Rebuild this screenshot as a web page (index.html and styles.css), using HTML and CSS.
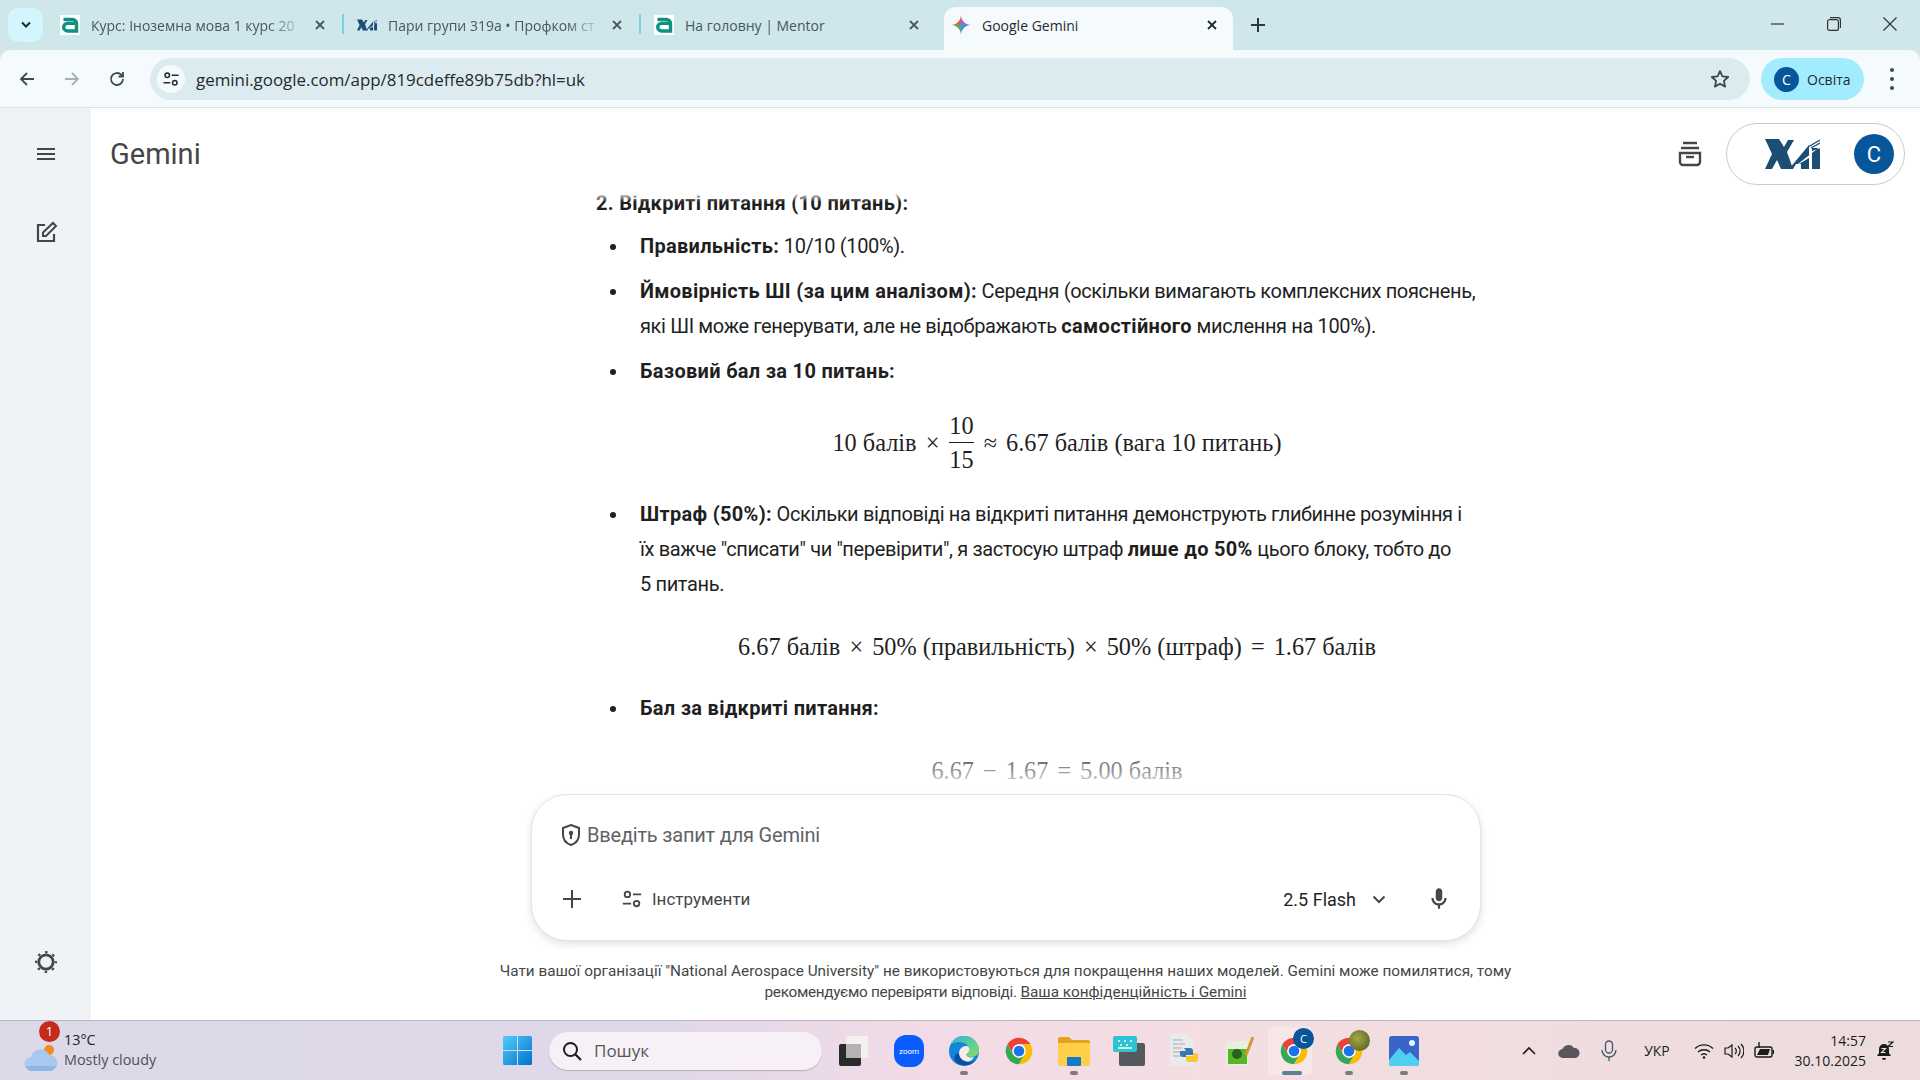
FILE: index.html
```html
<!DOCTYPE html>
<html lang="uk">

<head>
    <meta charset="UTF-8">
    <meta name="viewport" content="width=device-width, initial-scale=1.0">
    <title>Google Gemini</title>
    <link rel="stylesheet" href="styles.css">
</head>

<body>
    <svg class="sprite" xmlns="http://www.w3.org/2000/svg">
        <symbol id="mentor" viewBox="0 0 20 20">
            <rect width="20" height="20" fill="#fff"/>
            <path d="M3.500 4.500h9a4 4 0 0 1 4 4v7.500H7.500a3.800 3.800 0 0 1 0-7.600h9" fill="none" stroke="#0f9182" stroke-width="3.400"/>
        </symbol>
        <symbol id="xai" viewBox="0 0 55 30">
            <path fill="#1c4e73" d="M0 0h14l5 8 4-7h6l-7 12 6 17H16l-4-9-5 9H0l7-15z"/>
            <path fill="#1c4e73" d="M24 30 44 6v24h-8v-5h-5l-3 5z"/>
            <path fill="#1c4e73" d="M47 9h8v21h-8z"/>
            <path fill="#fff" d="M56 7 29 28l15-9 3-7 9-3z"/>
            <path stroke="#1c4e73" stroke-width="1.300" d="M43 8 55 1M46 9l9-5"/>
        </symbol>
        <symbol id="chrome" viewBox="0 0 48 48">
            <path fill="#ea4335" d="M6.680 14A20 20 0 0 1 41.320 14H24A10 10 0 0 0 15.340 29z"/>
            <path fill="#34a853" d="M6.680 14A20 20 0 0 0 24 44L32.660 29A10 10 0 0 1 15.340 29z"/>
            <path fill="#fbbc04" d="M41.320 14A20 20 0 0 1 24 44L32.660 29A10 10 0 0 0 24 14z"/>
            <circle cx="24" cy="24" r="10" fill="#fff"/>
            <circle cx="24" cy="24" r="8" fill="#1a73e8"/>
        </symbol>
        <symbol id="close" viewBox="0 0 12 12">
            <path d="M2 2l8 8M10 2l-8 8" fill="none" stroke="currentColor" stroke-width="1.800"/>
        </symbol>
        <symbol id="tune" viewBox="0 0 24 24">
            <g fill="none" stroke="currentColor" stroke-width="2">
                <circle cx="7" cy="7" r="3"/>
                <circle cx="17" cy="17" r="3"/>
                <path d="M13 7h9M2 17h9"/>
            </g>
        </symbol>
        <symbol id="mic" viewBox="0 0 24 24">
            <path fill="currentColor" d="M12 14c1.660 0 3-1.340 3-3V5c0-1.660-1.340-3-3-3S9 3.340 9 5v6c0 1.660 1.340 3 3 3z"/>
            <path fill="currentColor" d="M17 11c0 2.760-2.240 5-5 5s-5-2.240-5-5H5c0 3.530 2.610 6.430 6 6.920V21h2v-3.080c3.390-.49 6-3.390 6-6.920h-2z"/>
        </symbol>
    </svg>

    <div class="tabstrip">
        <button class="tab-menu">
            <svg width="12" height="8" viewBox="0 0 12 8"><path d="M2 1.500l4 4 4-4" fill="none" stroke="#1f2a2e" stroke-width="2"/></svg>
        </button>
        <div class="tab">
            <svg class="fav"><use href="#mentor"/></svg>
            <span class="tab-title">Курс: Іноземна мова 1 курс 20</span>
            <svg class="tab-close"><use href="#close"/></svg>
        </div>
        <div class="tab">
            <svg class="fav"><use href="#xai"/></svg>
            <span class="tab-title">Пари групи 319а • Профком ст</span>
            <svg class="tab-close"><use href="#close"/></svg>
        </div>
        <div class="tab tab-last">
            <svg class="fav"><use href="#mentor"/></svg>
            <span class="tab-title tab-title-full">На головну | Mentor</span>
            <svg class="tab-close"><use href="#close"/></svg>
        </div>
        <div class="tab tab-active">
            <svg class="fav" viewBox="0 0 24 24">
                <path fill="#ee5b3b" d="M12 0C12 6.600 6.600 12 0 12h12z"/>
                <path fill="#8e6fd8" d="M12 0c0 6.600 5.400 12 12 12H12z"/>
                <path fill="#3d8fe9" d="M24 12c-6.600 0-12 5.400-12 12V12z"/>
                <path fill="#49b36b" d="M12 24c0-6.600-5.400-12-12-12h12z"/>
            </svg>
            <span class="tab-title tab-title-full">Google Gemini</span>
            <svg class="tab-close"><use href="#close"/></svg>
        </div>
        <svg class="new-tab" width="14" height="14" viewBox="0 0 14 14"><path d="M7 0v14M0 7h14" stroke="#2d3a3e" stroke-width="2"/></svg>
        <div class="win-controls">
            <svg width="14" height="14" viewBox="0 0 14 14"><path d="M0 7h13" stroke="#333" stroke-width="1.200"/></svg>
            <svg width="14" height="14" viewBox="0 0 14 14"><rect x=".6" y="2.600" width="10.800" height="10.800" rx="2" fill="none" stroke="#333" stroke-width="1.200"/><path d="M3 .6h8a2.400 2.400 0 0 1 2.400 2.400v8" fill="none" stroke="#333" stroke-width="1.200"/></svg>
            <svg width="14" height="14" viewBox="0 0 14 14"><path d="M.5.5l13 13M13.500.5l-13 13" stroke="#333" stroke-width="1.200"/></svg>
        </div>
    </div>

    <div class="toolbar">
        <button class="nav-btn">
            <svg width="18" height="18" viewBox="0 0 18 18"><path d="M16 9H3M9 3L3 9l6 6" fill="none" stroke="#3c4a4f" stroke-width="1.800"/></svg>
        </button>
        <button class="nav-btn">
            <svg width="18" height="18" viewBox="0 0 18 18"><path d="M2 9h13M9 3l6 6-6 6" fill="none" stroke="#a6b1b5" stroke-width="1.800"/></svg>
        </button>
        <button class="nav-btn">
            <svg width="18" height="18" viewBox="0 0 18 18"><path d="M15 9a6 6 0 1 1-1.800-4.300L15 6.500M15 2v4.500h-4.500" fill="none" stroke="#3c4a4f" stroke-width="1.800"/></svg>
        </button>
        <div class="omnibox">
            <span class="site-info"><svg width="18" height="18"><use href="#tune"/></svg></span>
            <span class="url">gemini.google.com/app/819cdeffe89b75db?hl=uk</span>
            <svg class="star" width="20" height="20" viewBox="0 0 20 20"><path d="M10 2l2.400 5.400 5.800.6-4.300 3.900 1.200 5.700L10 14.700l-5.100 2.900 1.200-5.700L1.800 8l5.800-.6z" fill="none" stroke="#3c4a4f" stroke-width="1.800" stroke-linejoin="round"/></svg>
        </div>
        <div class="profile-chip">
            <span class="chip-avatar">C</span>
            <span>Освіта</span>
        </div>
        <div class="dots"><i></i><i></i><i></i></div>
    </div>

    <div class="app">
        <aside class="sidebar">
            <svg width="18" height="14" viewBox="0 0 18 14"><path d="M0 2h18M0 7h18M0 12h18" stroke="#444746" stroke-width="2"/></svg>
            <svg class="side-edit" width="24" height="24" viewBox="0 0 24 24"><path d="M11 4H4v16h16v-7" fill="none" stroke="#444746" stroke-width="2.200"/><path d="M9 15v-3.500L19 2l3 3-10 10z" fill="none" stroke="#444746" stroke-width="2"/></svg>
            <svg class="side-settings" width="24" height="24" viewBox="0 0 24 24"><circle cx="12" cy="12" r="7.200" fill="none" stroke="#444746" stroke-width="2.800"/><circle cx="12" cy="12" r="9.800" fill="none" stroke="#444746" stroke-width="2.200" stroke-dasharray="2.600 5.097" stroke-dashoffset="1.300"/></svg>
        </aside>

        <main class="main">
            <header class="app-header">
                <span class="brand">Gemini</span>
                <svg class="archive" width="24" height="26" viewBox="0 0 24 26"><path d="M5 2h14M3 7h18" stroke="#444746" stroke-width="2.400"/><path d="M2 12h20v9a3 3 0 0 1-3 3H5a3 3 0 0 1-3-3z" fill="none" stroke="#444746" stroke-width="2.400"/><path d="M8 16h8" stroke="#444746" stroke-width="2.400"/></svg>
                <div class="account">
                    <svg class="account-logo"><use href="#xai"/></svg>
                    <span class="account-avatar">C</span>
                </div>
            </header>

            <section class="conversation">
                <div class="answer">
                    <h3 class="answer-head">2. Відкриті питання (10 питань):</h3>
                    <ul class="answer-list">
                        <li><b>Правильність:</b> 10/10 (100%).</li>
                        <li><b>Ймовірність ШІ (за цим аналізом):</b> Середня (оскільки вимагають комплексних пояснень, які ШІ може генерувати, але не відображають <b>самостійного</b> мислення на 100%).</li>
                        <li>
                            <b>Базовий бал за 10 питань:</b>
                            <div class="math math-tall">10 балів <span class="op">×</span>
                                <span class="frac"><span>10</span><span class="frac-low">15</span></span>
                                <span class="op">≈</span> 6.67 балів (вага 10 питань)</div>
                        </li>
                        <li>
                            <b>Штраф (50%):</b> Оскільки відповіді на відкриті питання демонструють глибинне розуміння і їх важче "списати" чи "перевірити", я застосую штраф <b>лише до 50%</b> цього блоку, тобто до<br>5 питань.
                            <div class="math">6.67 балів <span class="op">×</span> 50% (правильність) <span class="op">×</span> 50% (штраф) <span class="op">=</span> 1.67 балів</div>
                        </li>
                        <li>
                            <b>Бал за відкриті питання:</b>
                            <div class="math">6.67 <span class="op">−</span> 1.67 <span class="op">=</span> 5.00 балів</div>
                        </li>
                    </ul>
                </div>
            </section>

            <div class="composer">
                <div class="composer-input">
                    <svg width="20" height="24" viewBox="0 0 20 24"><path d="M10 2l8 3v6.500c0 5-3.400 8.900-8 10.500-4.600-1.600-8-5.500-8-10.500V5z" fill="none" stroke="#444746" stroke-width="2"/><circle cx="10" cy="10" r="2.200" fill="#444746"/><path d="M10 11v5" stroke="#444746" stroke-width="2"/></svg>
                    <span>Введіть запит для Gemini</span>
                </div>
                <div class="composer-tools">
                    <svg class="tool-plus" width="18" height="18" viewBox="0 0 18 18"><path d="M9 0v18M0 9h18" stroke="#444746" stroke-width="2"/></svg>
                    <svg class="tool-tune" width="22" height="22"><use href="#tune"/></svg>
                    <span class="tool-label">Інструменти</span>
                    <span class="model">2.5 Flash</span>
                    <svg class="model-caret" width="14" height="9" viewBox="0 0 14 9"><path d="M1.500 1.500L7 7l5.500-5.500" fill="none" stroke="#444746" stroke-width="2"/></svg>
                    <svg class="tool-mic" width="26" height="26"><use href="#mic"/></svg>
                </div>
            </div>

            <p class="disclaimer">Чати вашої організації "National Aerospace University" не використовуються для покращення наших моделей. Gemini може помилятися, тому<br><span class="disclaimer-lead">рекомендуємо перевіряти відповіді.</span> <a href="#">Ваша конфіденційність і Gemini</a></p>
        </main>
    </div>

    <footer class="taskbar">
        <div class="weather">
            <div class="weather-icon">
                <svg width="34" height="30" viewBox="0 0 34 30"><circle cx="25" cy="8" r="5" fill="#f08a24"/><path d="M8 29a7 7 0 0 1-1-14A9.500 9.500 0 0 1 25 13a8 8 0 0 1 1 16z" fill="#a9c8ee"/><path d="M8 29a7 7 0 0 1-6-5h30a8 8 0 0 1-6 5z" fill="#8fb4e6"/></svg>
                <span class="weather-badge">1</span>
            </div>
            <div class="weather-text">
                <span>13°C</span>
                <span class="weather-sub">Mostly cloudy</span>
            </div>
        </div>
        <svg class="win-logo" width="29" height="29" viewBox="0 0 29 29">
            <defs>
                <linearGradient id="win" x1="0" y1="0" x2="1" y2="1"><stop offset="0" stop-color="#52cdf9"/><stop offset="1" stop-color="#0071cf"/></linearGradient>
            </defs>
            <path fill="url(#win)" d="M0 1.500A1.500 1.500 0 0 1 1.500 0H14v14H0zM15 0h12.500A1.500 1.500 0 0 1 29 1.500V14H15zM0 15h14v14H1.500A1.500 1.500 0 0 1 0 27.500zM15 15h14v12.500a1.500 1.500 0 0 1-1.500 1.500H15z"/>
        </svg>
        <div class="search-box">
            <svg width="20" height="20" viewBox="0 0 20 20"><circle cx="8.500" cy="8.500" r="6.500" fill="none" stroke="#1c1c1c" stroke-width="2"/><path d="M13 13l6 6" stroke="#1c1c1c" stroke-width="2.200"/></svg>
            <span>Пошук</span>
        </div>
        <div class="apps">
            <div class="app-cell">
                <svg width="32" height="32" viewBox="0 0 32 32"><rect x="8" y="1" width="22" height="22" rx="2" fill="#f4f0f0"/><rect x="1" y="9" width="22" height="22" rx="2" fill="#2a2a2a"/><rect x="8" y="9" width="15" height="14" fill="#b5b2b2"/></svg>
            </div>
            <div class="app-cell">
                <svg width="30" height="32" viewBox="0 0 30 32"><rect width="30" height="32" rx="12" fill="#0b5cff"/><text x="15" y="19" text-anchor="middle" font-size="8" fill="#fff" font-family="Roboto, sans-serif">zoom</text></svg>
            </div>
            <div class="app-cell is-open">
                <svg width="32" height="34" viewBox="0 0 32 34">
                    <defs>
                        <linearGradient id="edgeTop" x1="0" y1="0" x2="1" y2="1"><stop offset="0" stop-color="#2fb6d8"/><stop offset="1" stop-color="#86df5f"/></linearGradient>
                    </defs>
                    <circle cx="16" cy="17" r="15" fill="#0f86d8"/>
                    <path d="M3 11C6 4 11 2 16 2c9 0 15 7 15 14 0 5-4 7-8 7-3.500 0-5-1.500-5-2 3-2 4-6 2-9C17 8 8 6 3 11z" fill="url(#edgeTop)"/>
                    <path d="M11 20c0-6 5-9 9-7.500 2 1.500 2 5.500-2 8 1 2.500 4 3.500 8 2.500-2 4-6 5.500-9 4-4-1-6-4-6-7z" fill="#f7ece9"/>
                    <path d="M11 19c0 6 6 10 12 9 3-.5 5-2 6-4-4 8-15 10-21 4-3-3-2-8 3-9z" fill="#0b4f9e"/>
                </svg>
            </div>
            <div class="app-cell"><svg width="32" height="32"><use href="#chrome"/></svg></div>
            <div class="app-cell is-open">
                <svg width="32" height="30" viewBox="0 0 32 30"><path d="M0 3a2 2 0 0 1 2-2h9l3 3h16a2 2 0 0 1 2 2v3H0z" fill="#e0a31a"/><path d="M0 7h32v21a2 2 0 0 1-2 2H2a2 2 0 0 1-2-2z" fill="#ffcf4a"/><rect x="9" y="21" width="14" height="9" rx="1" fill="#1479c9"/></svg>
            </div>
            <div class="app-cell">
                <svg width="32" height="30" viewBox="0 0 32 30"><rect x="6" y="7" width="26" height="23" rx="2" fill="#55595e"/><rect width="24" height="16" rx="2" fill="#2cc3d3"/><path d="M5 5h2M11 5h2M17 5h2M7 9h2M13 9h2M5 12h14" stroke="#fff" stroke-width="1.500"/></svg>
            </div>
            <div class="app-cell">
                <svg width="28" height="34" viewBox="0 0 28 34"><path d="M0 0h16l8 8v24H0z" fill="#e9eaec"/><path d="M3 6h10M3 10h12M3 14h9M3 18h11M3 22h8" stroke="#aaa"/><path d="M14 14h6a3 3 0 0 1 3 3v4h-7v2h-3a3 3 0 0 1-3-3v-3h6z" fill="#3a78ab"/><path d="M23 19h2a3 3 0 0 1 3 3v3a3 3 0 0 1-3 3h-6a3 3 0 0 1-3-3v-3h7z" fill="#f8c92f"/></svg>
            </div>
            <div class="app-cell">
                <svg width="30" height="32" viewBox="0 0 30 32"><path d="M2 6h22v24H2z" fill="#e8efdd"/><path d="M4 14h19v15H4z" fill="#59b526"/><circle cx="13" cy="19" r="5" fill="#26621b"/><path d="M22 20L29 2" stroke="#d59a2f" stroke-width="3"/></svg>
            </div>
            <div class="app-cell is-active">
                <svg class="app-chrome" width="32" height="32"><use href="#chrome"/></svg>
                <span class="profile-badge">C</span>
            </div>
            <div class="app-cell is-open">
                <svg class="app-chrome" width="32" height="32"><use href="#chrome"/></svg>
                <span class="profile-badge melon"></span>
            </div>
            <div class="app-cell is-open">
                <svg width="30" height="30" viewBox="0 0 30 30"><rect width="30" height="30" rx="3" fill="#3b64c8"/><path d="M0 24l10-12 7 7 4-3 9 9v2a3 3 0 0 1-3 3H3a3 3 0 0 1-3-3z" fill="#4fd0f0"/><circle cx="23" cy="7" r="3" fill="#eaf6ff"/></svg>
            </div>
        </div>
        <div class="tray">
            <div class="tray-cell w40"><svg width="14" height="9" viewBox="0 0 14 9"><path d="M1 8l6-6 6 6" fill="none" stroke="#1c1c1c" stroke-width="1.600"/></svg></div>
            <div class="tray-cell w40"><svg width="22" height="14" viewBox="0 0 22 14"><path d="M5 14a4.500 4.500 0 0 1-.5-9A6.500 6.500 0 0 1 16 4a5 5 0 0 1 1 10z" fill="#59555a"/></svg></div>
            <div class="tray-cell w40"><svg width="16" height="22" viewBox="0 0 16 22"><rect x="4.500" y="1" width="7" height="12" rx="3.500" fill="none" stroke="#3e5868" stroke-width="1.300"/><path d="M1 10a7 7 0 0 0 14 0M8 17v4" fill="none" stroke="#3e5868" stroke-width="1.300"/></svg></div>
            <div class="tray-cell w56">УКР</div>
            <div class="tray-cell w38"><svg width="20" height="16" viewBox="0 0 20 16"><path d="M1 5.500a13 13 0 0 1 18 0M4 9a9 9 0 0 1 12 0M7 12a4.500 4.500 0 0 1 6 0" fill="none" stroke="#1c1c1c" stroke-width="1.400"/><circle cx="10" cy="14.500" r="1.300" fill="#1c1c1c"/></svg></div>
            <div class="tray-cell w22"><svg width="20" height="16" viewBox="0 0 20 16"><path d="M1 5h3l4-3v12l-4-3H1z" fill="none" stroke="#1c1c1c" stroke-width="1.200"/><path d="M11 5a4 4 0 0 1 0 6M14 3a7 7 0 0 1 0 10M17 1a10 10 0 0 1 0 14" fill="none" stroke="#1c1c1c" stroke-width="1.200"/></svg></div>
            <div class="tray-cell w38"><svg width="20" height="18" viewBox="0 0 20 18"><path d="M3 5h13a2 2 0 0 1 2 2v6a2 2 0 0 1-2 2H3a2 2 0 0 1-2-2V7a2 2 0 0 1 2-2z" fill="none" stroke="#1c1c1c" stroke-width="1.400"/><path d="M6 7h10l-2 6H3z" fill="#1c1c1c"/><path d="M19.300 8v4" stroke="#1c1c1c" stroke-width="1.400"/><path d="M5 0v6" stroke="#1c1c1c" stroke-width="1.400"/></svg></div>
            <div class="clock">
                <span>14:57</span>
                <span>30.10.2025</span>
            </div>
            <div class="tray-cell w38"><svg width="18" height="20" viewBox="0 0 18 20"><path d="M8 3a5 5 0 0 0-5 5v4l-2 3h14l-2-3V8a5 5 0 0 0-5-5z" fill="#1c1c1c"/><path d="M6 17a2 2 0 0 0 4 0" fill="#1c1c1c"/><path d="M5.500 7.500h4l-4 4h4" fill="none" stroke="#f0e0e0" stroke-width="1.100"/><path d="M12 1h5l-5 4.500h5" fill="none" stroke="#1c1c1c" stroke-width="1.200"/></svg></div>
        </div>
    </footer>
</body>

</html>
```

FILE: styles.css
```css
* {
    box-sizing: border-box;
}

html, body {
    margin: 0;
    height: 100%;
}

body {
    display: flex;
    flex-direction: column;
    width: 1920px;
    height: 1080px;
    overflow: hidden;
    font-family: Roboto, "Noto Sans", sans-serif;
    color: #1f1f1f;
    background: #cfe6eb;
}

.sprite {
    display: none;
}

button {
    border: none;
    background: none;
    padding: 0;
}

/* вкладки */
.tabstrip {
    display: flex;
    align-items: flex-end;
    flex: 0 0 50px;
    padding-left: 8px;
    font-family: "Open Sans", sans-serif;
    font-size: 14px;
}

.tab-menu {
    display: flex;
    align-items: center;
    justify-content: center;
    align-self: flex-start;
    width: 35px;
    height: 34px;
    margin: 8px 4px 0 0;
    border-radius: 10px;
    background: #d3f5fd;
}

.tab {
    position: relative;
    display: flex;
    align-items: center;
    width: 297px;
    height: 43px;
    padding: 0 18px 7px 13px;
    color: #46585e;
}

.tab::after {
    content: "";
    position: absolute;
    right: 0;
    top: 7px;
    width: 2px;
    height: 20px;
    background: #7ad3e2;
}

.tab-last::after {
    display: none;
}

.tab-active {
    width: 289px;
    margin-left: 6px;
    padding: 0 15px 7px 7px;
    border-radius: 12px 12px 0 0;
    background: #f5fafd;
    color: #1f2a2e;
}

.tab-active::after {
    display: none;
}

.fav {
    flex: 0 0 20px;
    width: 20px;
    height: 20px;
}

.tab-title {
    flex: 1;
    margin: 0 6px 0 11px;
    overflow: hidden;
    white-space: nowrap;
    -webkit-mask-image: linear-gradient(to right, #000 82%, transparent 99%);
    mask-image: linear-gradient(to right, #000 82%, transparent 99%);
}

.tab-title-full {
    -webkit-mask-image: none;
    mask-image: none;
}

.tab-close {
    flex: 0 0 12px;
    width: 12px;
    height: 12px;
}

.new-tab {
    margin: 0 0 18px 18px;
}

.win-controls {
    display: flex;
    align-self: flex-start;
    gap: 42px;
    margin: 17px 23px 0 auto;
}

/* адресний рядок */
.toolbar {
    display: flex;
    align-items: center;
    flex: 0 0 58px;
    padding: 1px 0 0 9px;
    border-bottom: 1px solid #d5e2e6;
    border-radius: 10px 10px 0 0;
    background: #f5fafd;
}

.nav-btn {
    display: flex;
    align-items: center;
    justify-content: center;
    width: 36px;
    height: 36px;
    margin-right: 9px;
}

.omnibox {
    display: flex;
    align-items: center;
    width: 1600px;
    height: 42px;
    margin-left: 6px;
    padding: 0 20px 0 7px;
    border-radius: 21px;
    background: #dcebf0;
}

.site-info {
    display: flex;
    align-items: center;
    justify-content: center;
    width: 28px;
    height: 28px;
    border-radius: 50%;
    background: #f5fafd;
    color: #1f2a2e;
}

.url {
    flex: 1;
    margin-left: 11px;
    font-family: "Open Sans", sans-serif;
    font-size: 16.9px;
    color: #1f2a2e;
}

.profile-chip {
    display: flex;
    align-items: center;
    gap: 8px;
    width: 103px;
    height: 42px;
    margin-left: 11px;
    padding-left: 13px;
    border-radius: 21px;
    background: #a1edff;
    font-family: "Open Sans", sans-serif;
    font-size: 14px;
    color: #1f2a2e;
}

.chip-avatar {
    display: flex;
    align-items: center;
    justify-content: center;
    width: 25px;
    height: 25px;
    border-radius: 50%;
    background: #07569a;
    color: #fff;
    font-size: 14px;
}

.dots {
    display: flex;
    flex-direction: column;
    align-items: center;
    gap: 5px;
    margin-left: 26px;
}

.dots i {
    width: 4px;
    height: 4px;
    border-radius: 50%;
    background: #3c4a4f;
}

/* сторінка */
.app {
    display: flex;
    flex: 1;
    min-height: 0;
    background: #fff;
}

.sidebar {
    display: flex;
    flex-direction: column;
    align-items: center;
    flex: 0 0 91px;
    padding-top: 39px;
    background: #eff3f8;
}

.side-edit {
    margin-top: 60px;
}

.side-settings {
    margin-top: auto;
    margin-bottom: 46px;
}

.main {
    display: flex;
    flex-direction: column;
    flex: 1;
    min-width: 0;
}

.app-header {
    display: flex;
    align-items: center;
    flex: 0 0 78px;
    padding: 14px 15px 0 19px;
}

.brand {
    margin-right: auto;
    font-size: 29px;
    color: #444746;
}

.archive {
    margin-right: 24px;
}

.account {
    display: flex;
    align-items: center;
    width: 179px;
    height: 62px;
    padding: 0 10px 0 38px;
    border: 1px solid #c9cbcc;
    border-radius: 31px;
}

.account-logo {
    width: 55px;
    height: 30px;
}

.account-avatar {
    display: flex;
    align-items: center;
    justify-content: center;
    width: 40px;
    height: 40px;
    margin-left: auto;
    border-radius: 50%;
    background: #07569a;
    color: #fff;
    font-size: 22px;
}

.conversation {
    position: relative;
    flex: 1;
    min-height: 0;
    overflow: hidden;
}

.conversation::before,
.conversation::after {
    content: "";
    position: absolute;
    left: 0;
    right: 0;
    z-index: 1;
}

.conversation::before {
    top: 0;
    height: 16px;
    background: linear-gradient(to bottom, #fff 40%, rgba(255, 255, 255, 0));
}

.conversation::after {
    bottom: 0;
    height: 50px;
    background: linear-gradient(to top, #fff, rgba(255, 255, 255, 0));
}

.answer {
    width: 884px;
    margin-left: 505px;
    font-size: 20px;
    line-height: 35px;
    letter-spacing: -0.36px;
}

.answer b,
.answer-head {
    letter-spacing: 0.3px;
}

.answer-head {
    margin: 0 0 8px;
    font-size: 20px;
    font-weight: 700;
}

.answer-list {
    margin: 0;
    padding: 0 0 0 44px;
    list-style: none;
}

.answer-list li {
    margin-bottom: 10px;
}

.answer-list li::before {
    content: "";
    float: left;
    width: 6px;
    height: 6px;
    margin: 15px 0 0 -30px;
    border-radius: 50%;
    background: #1f1f1f;
}

/* формули */
.math {
    display: flex;
    align-items: center;
    justify-content: center;
    gap: 1px;
    height: 70px;
    margin-top: 9px;
    padding-right: 6px;
    font-family: "Liberation Serif", serif;
    font-size: 24.3px;
    letter-spacing: 0;
    white-space: pre;
}

.math-tall {
    height: 90px;
    margin-top: 8px;
}

.op {
    margin: 0 2px;
}

.frac {
    display: inline-flex;
    flex-direction: column;
    align-items: center;
    margin: 0 7px;
    line-height: 33px;
}

.frac-low {
    border-top: 1px solid #1f1f1f;
}

/* поле вводу */
.composer {
    flex: 0 0 147px;
    width: 950px;
    margin-left: 440px;
    padding: 0 29px;
    border: 1px solid #e3e3e3;
    border-radius: 36px;
    background: #fff;
    box-shadow: 0 3px 8px rgba(0, 0, 0, 0.12);
}

.composer-input {
    display: flex;
    align-items: center;
    gap: 6px;
    height: 80px;
    font-size: 20px;
    letter-spacing: -0.2px;
    color: #5f6368;
}

.composer-tools {
    display: flex;
    align-items: center;
    height: 48px;
    font-size: 18px;
    color: #444746;
}

.tool-plus {
    margin-left: 2px;
}

.tool-tune {
    margin-left: 40px;
}

.tool-label {
    margin-left: 9px;
    font-size: 17px;
}

.model {
    margin-left: auto;
    color: #1f1f1f;
}

.model-caret {
    margin-left: 16px;
}

.tool-mic {
    margin: 0 0 0 39px;
    color: #444746;
    transform: translateX(1px);
}

.disclaimer {
    flex: 0 0 79px;
    margin: 0;
    padding-top: 20px;
    font-size: 15.3px;
    line-height: 21px;
    text-align: center;
    color: #444746;
}

.disclaimer-lead {
    letter-spacing: -0.29px;
}

.disclaimer a {
    color: #444746;
}

/* панель задач */
.taskbar {
    display: flex;
    align-items: center;
    flex: 0 0 60px;
    border-top: 1px solid #bdb2bd;
    background: linear-gradient(to right, #dcd9e9 0, #e0d8e8 35%, #f2dbe7 48%, #f4dee2 62%, #ecdcdc 100%);
    font-family: "Open Sans", sans-serif;
    font-size: 14px;
    color: #1c1c1c;
}

.weather {
    display: flex;
    align-items: center;
    flex: 0 0 503px;
    padding-left: 24px;
}

.weather-icon {
    position: relative;
    width: 34px;
    height: 30px;
    margin-top: 12px;
}

.weather-badge {
    position: absolute;
    left: 15px;
    top: -21px;
    width: 21px;
    height: 21px;
    border-radius: 50%;
    background: #c42b1c;
    color: #fff;
    font-size: 13px;
    line-height: 21px;
    text-align: center;
}

.weather-text {
    display: flex;
    flex-direction: column;
    margin: -1px 0 0 6px;
    font-size: 14.4px;
    line-height: 20px;
}

.weather-sub {
    color: #505055;
}

.win-logo {
    flex: 0 0 29px;
    margin-right: 17px;
}

.search-box {
    display: flex;
    align-items: center;
    gap: 12px;
    flex: 0 0 273px;
    height: 38px;
    margin-right: 4px;
    padding-left: 13px;
    border-radius: 19px;
    background: #f7f1f7;
    box-shadow: 0 1px 1px rgba(0, 0, 0, 0.2);
    font-size: 17px;
    color: #555;
}

.apps {
    display: flex;
    align-items: center;
}

.app-cell {
    position: relative;
    display: flex;
    align-items: center;
    justify-content: center;
    width: 55px;
    height: 48px;
}

.is-open::after,
.is-active::after {
    content: "";
    position: absolute;
    left: 50%;
    bottom: 0;
    width: 8px;
    height: 4px;
    margin-left: -4px;
    border-radius: 2px;
    background: #7b7b80;
}

.is-active::before {
    content: "";
    position: absolute;
    left: 2px;
    top: 0;
    bottom: 0;
    width: 44px;
    border-radius: 5px;
    background: #f6e8e8;
    box-shadow: 4px 0 0 -1px #f1e0e0;
}

.is-active::after {
    width: 20px;
    margin-left: -12px;
    background: #607f90;
}

.app-chrome {
    position: relative;
}

.profile-badge {
    position: absolute;
    right: 7px;
    top: 1px;
    width: 21px;
    height: 21px;
    border-radius: 50%;
    background: #07569a;
    color: #fff;
    font-size: 11px;
    line-height: 21px;
    text-align: center;
}

.melon {
    right: 6px;
    top: 3px;
    background: radial-gradient(circle at 40% 40%, #a2a845, #4f5720);
}

.tray {
    display: flex;
    align-items: center;
    margin-left: auto;
    padding-right: 16px;
}

.tray-cell {
    display: flex;
    align-items: center;
    justify-content: center;
    height: 40px;
}

.w22 { width: 22px; }
.w38 { width: 38px; }
.w40 { width: 40px; }
.w56 { width: 56px; }

.clock {
    display: flex;
    flex-direction: column;
    align-items: flex-end;
    width: 83px;
    line-height: 20px;
}
```
